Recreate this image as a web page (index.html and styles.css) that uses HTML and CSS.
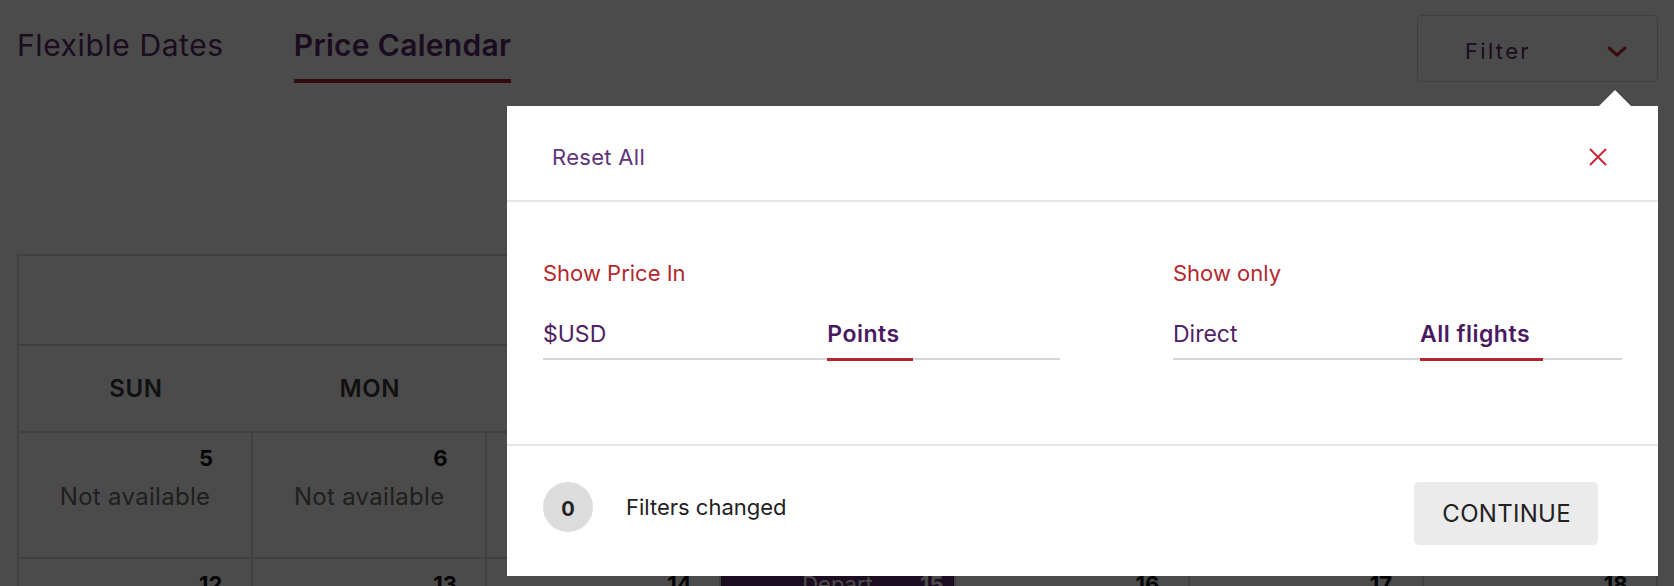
FILE: index.html
```html
<!DOCTYPE html>
<html lang="en">
<head>
<meta charset="utf-8">
<title>Price Calendar</title>
<link rel="stylesheet" href="styles.css">
</head>
<body>
<div class="page">
  <header class="topbar">
    <nav class="tabs">
      <a class="tab">Flexible Dates</a>
      <a class="tab active">Price Calendar</a>
    </nav>
    <button class="filter-btn">
      <span class="filter-label">Filter</span>
      <svg class="chevron" width="20" height="11" viewBox="0 0 20 11"><polyline points="2,2 10,9 18,2" fill="none" stroke="#c0272d" stroke-width="3" stroke-linecap="round" stroke-linejoin="round"/></svg>
    </button>
  </header>

  <section class="calendar">
    <div class="cal-month">April 2020</div>
    <div class="cal-days">
      <span>SUN</span><span>MON</span><span>TUE</span><span>WED</span><span>THU</span><span>FRI</span><span>SAT</span>
    </div>
    <div class="cal-week">
      <div class="cell"><span class="num">5</span><span class="note">Not available</span></div>
      <div class="cell"><span class="num">6</span><span class="note">Not available</span></div>
      <div class="cell"><span class="num">7</span><span class="note">Not available</span></div>
      <div class="cell"><span class="num">8</span><span class="note">Not available</span></div>
      <div class="cell"><span class="num">9</span><span class="note">Not available</span></div>
      <div class="cell"><span class="num">10</span><span class="note">Not available</span></div>
      <div class="cell"><span class="num">11</span><span class="note">Not available</span></div>
    </div>
    <div class="cal-week">
      <div class="cell"><span class="num">12</span><span class="note">Not available</span></div>
      <div class="cell"><span class="num">13</span><span class="note">Not available</span></div>
      <div class="cell"><span class="num">14</span><span class="note">Not available</span></div>
      <div class="cell selected"><div class="sel-bar"><span class="sel-label">Depart</span><span class="sel-num">15</span></div></div>
      <div class="cell"><span class="num">16</span><span class="note">Not available</span></div>
      <div class="cell"><span class="num">17</span><span class="note">Not available</span></div>
      <div class="cell"><span class="num">18</span><span class="note">Not available</span></div>
    </div>
  </section>
</div>

<div class="overlay"></div>

<div class="popup">
  <div class="caret"></div>
  <div class="popup-head">
    <button class="reset">Reset All</button>
    <button class="close" aria-label="Close">
      <svg width="18" height="18" viewBox="0 0 18 18"><path d="M1 1 L17 17 M17 1 L1 17" stroke="#c8283a" stroke-width="2" fill="none"/></svg>
    </button>
  </div>
  <div class="popup-body">
    <div class="group">
      <div class="group-label">Show Price In</div>
      <div class="options">
        <span class="opt">$USD</span>
        <span class="opt"><span class="opt-text active">Points</span></span>
      </div>
    </div>
    <div class="group">
      <div class="group-label">Show only</div>
      <div class="options">
        <span class="opt">Direct</span>
        <span class="opt"><span class="opt-text active">All flights</span></span>
      </div>
    </div>
  </div>
  <div class="popup-foot">
    <div class="changed">
      <span class="badge">0</span>
      <span class="changed-text">Filters changed</span>
    </div>
    <button class="continue">CONTINUE</button>
  </div>
</div>
</body>
</html>
```

FILE: styles.css
```css
* { box-sizing: border-box; }

html, body {
  margin: 0;
  height: 586px;
  overflow: hidden;
  background: #ffffff;
  font-family: Inter, "Noto Sans", "Liberation Sans", sans-serif;
}

button {
  font-family: inherit;
  border: 0;
  background: none;
  padding: 0;
  margin: 0;
  cursor: pointer;
}

.page {
  padding: 0 16px 0 17px;
}

/* ---------- top bar ---------- */
.topbar {
  display: flex;
  justify-content: space-between;
  align-items: flex-start;
  padding-top: 15px;
}

.tabs {
  display: flex;
  gap: 70px;
  padding-top: 12px;
}

.tab {
  font-size: 30px;
  line-height: 36px;
  color: #5b2a6e;
  padding-bottom: 16px;
  border-bottom: 4px solid transparent;
  letter-spacing: 0.6px;
}

.tab.active {
  font-weight: 600;
  letter-spacing: 0.3px;
  border-bottom-color: #b5262c;
}

.filter-btn {
  width: 241px;
  height: 67px;
  border: 1px solid #d4d4d4;
  border-radius: 4px;
  display: flex;
  align-items: center;
  padding: 4px 30px 0 47px;
  color: #5b2a6e;
  background: #fff;
}

.filter-label {
  font-size: 22px;
  letter-spacing: 2.3px;
}

.chevron {
  margin-left: auto;
  margin-top: 2px;
}

/* ---------- calendar ---------- */
.calendar {
  margin-top: 171px;
  border-top: 2px solid #d9d9d9;
  border-left: 2px solid #d9d9d9;
}

.cal-month {
  height: 90px;
  border-right: 2px solid #d9d9d9;
  border-bottom: 2px solid #d9d9d9;
  display: flex;
  align-items: center;
  justify-content: center;
  font-size: 24px;
  font-weight: 600;
  color: #333;
}

.cal-days {
  height: 87px;
  display: grid;
  grid-template-columns: repeat(7, 1fr);
  align-items: center;
  border-right: 2px solid #d9d9d9;
  border-bottom: 2px solid #d9d9d9;
}

.cal-days span {
  text-align: center;
  font-size: 24px;
  font-weight: 600;
  color: #3a3a3a;
  letter-spacing: 0.6px;
}

.cal-week {
  display: grid;
  grid-template-columns: repeat(7, 1fr);
}

.cell {
  height: 126px;
  border-right: 2px solid #d9d9d9;
  border-bottom: 2px solid #d9d9d9;
  padding-top: 12px;
  display: flex;
  flex-direction: column;
}

.num {
  padding-left: 180px;
  font-size: 22px;
  line-height: 26px;
  font-weight: 700;
  color: #111;
}

.note {
  margin-top: 13px;
  text-align: center;
  font-size: 24px;
  line-height: 26px;
  letter-spacing: 0.3px;
  color: #6a6a6a;
}

.cell.selected {
  padding-top: 0;
  background: #5b2a6e;
}

.sel-bar {
  display: grid;
  grid-template-columns: 1fr auto 1fr;
  align-items: center;
  padding: 12px 10px 0 10px;
  color: #fff;
  font-size: 22px;
  line-height: 26px;
}

.sel-label { grid-column: 2; }
.sel-num { grid-column: 3; justify-self: end; font-weight: 700; }

/* ---------- overlay & popup ---------- */
.overlay {
  position: fixed;
  inset: 0;
  background: rgba(0, 0, 0, 0.705);
}

.popup {
  position: absolute;
  left: 507px;
  top: 106px;
  width: 1151px;
  background: #fff;
}

.caret {
  position: absolute;
  top: -16px;
  left: 1092px;
  width: 0;
  height: 0;
  border-left: 16px solid transparent;
  border-right: 16px solid transparent;
  border-bottom: 16px solid #fff;
}

.popup-head {
  height: 96px;
  display: flex;
  justify-content: space-between;
  align-items: flex-start;
  padding: 38px 51px 0 45px;
  border-bottom: 2px solid #e6e6e6;
}

.reset {
  font-size: 22px;
  line-height: 26px;
  color: #5e3578;
  letter-spacing: 0.3px;
}

.close {
  margin-top: 4px;
  width: 18px;
  height: 18px;
  display: block;
}

.close svg { display: block; }

.popup-body {
  display: grid;
  grid-template-columns: 517px 1fr;
  column-gap: 113px;
  padding: 58px 36px 84px 36px;
  border-bottom: 2px solid #e6e6e6;
}

.group-label {
  font-size: 22px;
  line-height: 26px;
  color: #b3282e;
  margin-bottom: 35px;
}

.options {
  display: grid;
  grid-template-columns: 55% 45%;
  border-bottom: 2px solid #d6d6d6;
}

.opt {
  font-size: 23px;
  line-height: 26px;
  color: #4f2166;
  padding-bottom: 11px;
}

.opt-text {
  display: inline-block;
}

.opt-text.active {
  font-weight: 600;
  color: #4a1a60;
  letter-spacing: 0.5px;
  padding-right: 13px;
  padding-bottom: 11px;
  margin-bottom: -11px;
  box-shadow: 0 3px 0 #b5262c;
}

.popup-foot {
  display: flex;
  justify-content: space-between;
  align-items: flex-start;
  padding: 36px 60px 31px 36px;
}

.changed {
  display: flex;
  align-items: center;
}

.badge {
  width: 50px;
  height: 50px;
  border-radius: 50%;
  background: #dcdcdc;
  display: flex;
  align-items: center;
  justify-content: center;
  font-size: 20px;
  font-weight: 700;
  color: #222;
  padding-top: 4px;
}

.changed-text {
  margin-left: 33px;
  font-size: 22px;
  color: #222;
}

.continue {
  height: 63px;
  padding: 0 27px 0 28px;
  background: #ebebeb;
  border-radius: 5px;
  font-size: 24px;
  color: #222;
  letter-spacing: 0.3px;
}
```
